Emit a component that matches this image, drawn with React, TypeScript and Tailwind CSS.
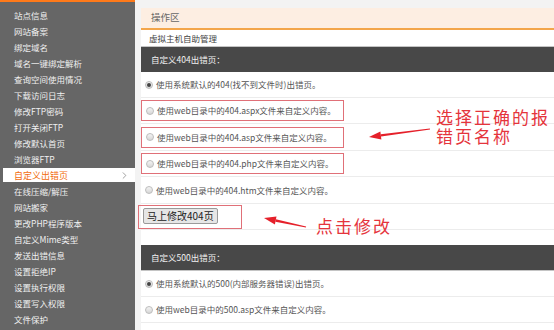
import { ChevronRight } from "lucide-react";

const menu = [
  "站点信息",
  "网站备案",
  "绑定域名",
  "域名一键绑定解析",
  "查询空间使用情况",
  "下载访问日志",
  "修改FTP密码",
  "打开关闭FTP",
  "修改默认首页",
  "浏览器FTP",
  "自定义出错页",
  "在线压缩/解压",
  "网站搬家",
  "更改PHP程序版本",
  "自定义Mime类型",
  "发送出错信息",
  "设置拒绝IP",
  "设置执行权限",
  "设置写入权限",
  "文件保护",
];

function Radio({ checked }: { checked?: boolean }) {
  return (
    <span className="w-[8px] h-[8px] rounded-full border border-[#bdbdbd] bg-gradient-to-b from-[#f4f4f4] to-[#d6d6d6] flex items-center justify-center shrink-0">
      {checked && <span className="w-[4px] h-[4px] rounded-full bg-[#444]" />}
    </span>
  );
}

function Option({ text, checked, boxed, h }: { text: string; checked?: boolean; boxed?: boolean; h: string }) {
  const inner = (
    <div className="flex items-center gap-[3px] pl-[4px] whitespace-nowrap">
      <Radio checked={checked} />
      <span>{text}</span>
    </div>
  );
  return (
    <div className={`${h} flex items-center border-b border-[#ececec]`}>
      {boxed ? (
        <div className="w-[203px] h-[21px] border border-[#e07078] flex items-center">{inner}</div>
      ) : (
        inner
      )}
    </div>
  );
}

export default function App() {
  return (
    <div className="relative w-[554px] h-[330px] overflow-hidden flex bg-[#f3f3f3] font-['Noto_Sans_CJK_SC','Noto_Sans',sans-serif] text-[8.5px] leading-none">
      <aside className="w-[135px] shrink-0 bg-[#666666] border-t-2 border-[#ff7a1a] pt-[5px]">
        {menu.map((m) =>
          m === "自定义出错页" ? (
            <div key={m} className="h-[14px] my-[1px] ml-[3px] bg-white flex items-center justify-between pl-[11px] pr-[5px] text-[#f26c0d] text-[9px]">
              <span>{m}</span>
              <ChevronRight size={11} strokeWidth={1.5} className="text-[#777]" />
            </div>
          ) : (
            <div key={m} className="h-4 flex items-center pl-[14px] text-[#f0f0f0]">
              {m}
            </div>
          )
        )}
      </aside>

      <main className="flex-1 ml-[6px] mt-[8px] bg-white text-[#555] flex flex-col">
        <div className="h-[22px] bg-[#fdeee2] border-b-2 border-[#f3a54a] flex items-center pl-[10px] text-[9.5px] text-[#666]">
          操作区
        </div>
        <div className="h-[16px] flex items-center pl-[8px] text-[#444]">虚拟主机自助管理</div>
        <div className="h-[26px] bg-[#484848] border-t border-[#c4c4c4] flex items-center pl-[10px] text-[#f2f2f2]">
          自定义404出错页：
        </div>
        <Option h="h-[26px]" checked text="使用系统默认的404(找不到文件时)出错页。" />
        <Option h="h-[26px]" boxed text="使用web目录中的404.aspx文件来自定义内容。" />
        <Option h="h-[27px]" boxed text="使用web目录中的404.asp文件来自定义内容。" />
        <Option h="h-[26px]" boxed text="使用web目录中的404.php文件来自定义内容。" />
        <Option h="h-[27px]" text="使用web目录中的404.htm文件来自定义内容。" />
        <div className="h-[26px] border-b border-[#ececec] flex items-end">
          <div className="-ml-[3px] w-[104px] h-[24px] border border-[#e07078] flex items-start pt-[2px] pl-[4px]">
            <button className="h-[16px] px-[3px] bg-[#e6e6e6] border border-[#9a9a9a] rounded-[2px] text-[10px] text-[#222] leading-none">
              马上修改404页
            </button>
          </div>
        </div>
        <div className="h-[15px]" />
        <div className="h-[26px] bg-[#484848] border-b border-[#c4c4c4] flex items-center pl-[10px] text-[#f2f2f2]">
          自定义500出错页：
        </div>
        <Option h="h-[26px]" checked text="使用系统默认的500(内部服务器错误)出错页。" />
        <Option h="h-[26px]" text="使用web目录中的500.asp文件来自定义内容。" />
      </main>

      <div className="absolute left-[436px] top-[107px] text-[17px] leading-[19px] tracking-[2px] text-[#e5343c]">
        选择正确的报
        <br />
        错页名称
      </div>
      <div className="absolute left-[316px] top-[216px] text-[17px] leading-[19px] tracking-[2px] text-[#e5343c]">
        点击修改
      </div>

      <svg className="absolute inset-0 pointer-events-none" width="554" height="330" viewBox="0 0 554 330">
        <polygon points="369,137 381.4,139.4 380.4,131.5" fill="#e5202a" />
        <polygon points="381.1,136.6 380.7,134.2 429.9,128.5 430.1,129.5" fill="#e5202a" />
        <polygon points="264,218 276.5,216.6 274.9,224.4" fill="#e5202a" />
        <polygon points="275.9,219.3 275.4,221.7 305.9,227.5 306.1,226.5" fill="#e5202a" />
      </svg>
    </div>
  );
}
